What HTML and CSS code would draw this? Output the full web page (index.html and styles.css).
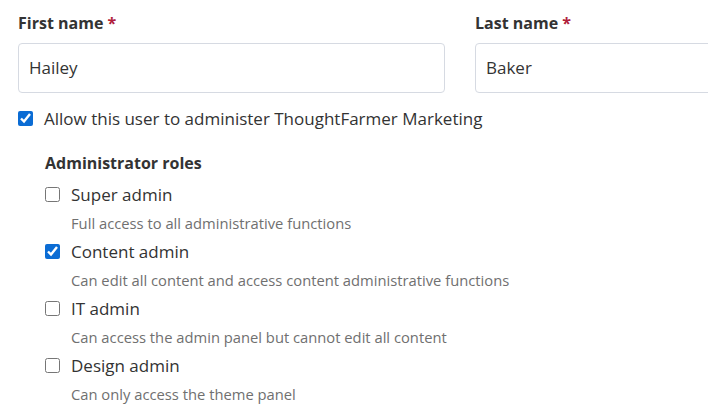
FILE: index.html
```html
<!DOCTYPE html>
<html>
<head>
<meta charset="utf-8">
<link rel="stylesheet" href="styles.css">
</head>
<body>
<div class="form">
  <div class="names">
    <div class="field">
      <label class="label">First name <span class="req">*</span></label>
      <div class="input">Hailey</div>
    </div>
    <div class="field">
      <label class="label">Last name <span class="req">*</span></label>
      <div class="input">Baker</div>
    </div>
  </div>
  <label class="allow"><input type="checkbox" checked><span>Allow this user to administer ThoughtFarmer Marketing</span></label>
  <div class="roles">
    <div class="roles-title">Administrator roles</div>
    <div class="role">
      <label class="opt"><input type="checkbox"><span>Super admin</span></label>
      <div class="desc">Full access to all administrative functions</div>
    </div>
    <div class="role">
      <label class="opt"><input type="checkbox" checked><span>Content admin</span></label>
      <div class="desc">Can edit all content and access content administrative functions</div>
    </div>
    <div class="role">
      <label class="opt"><input type="checkbox"><span>IT admin</span></label>
      <div class="desc">Can access the admin panel but cannot edit all content</div>
    </div>
    <div class="role">
      <label class="opt"><input type="checkbox"><span>Design admin</span></label>
      <div class="desc">Can only access the theme panel</div>
    </div>
  </div>
</div>
</body>
</html>
```
FILE: styles.css
```css
html, body {
  margin: 0;
  padding: 0;
  background: #fff;
  overflow: hidden;
}
body {
  font-family: "Open Sans", "Noto Sans", sans-serif;
  color: #333;
}
.form {
  padding: 11px 0 0 18px;
  width: 690px;
}
.names {
  display: grid;
  grid-template-columns: 427px 1fr;
  column-gap: 30px;
  margin-right: -236px;
}
.field {
  display: flex;
  flex-direction: column;
  gap: 8px;
}
.label {
  font-weight: 700;
  font-size: 16px;
  line-height: 24px;
  color: #333;
}
.req {
  color: #b01e3c;
}
.input {
  box-sizing: border-box;
  height: 50px;
  border: 1px solid #d6dae2;
  border-radius: 4px;
  padding: 0 10px 2px;
  display: flex;
  align-items: center;
  font-size: 17px;
  color: #333;
}
input[type="checkbox"] {
  width: 15px;
  height: 15px;
  margin: 0;
  accent-color: #0b6cd4;
  flex: none;
}
.allow {
  display: flex;
  align-items: center;
  gap: 11px;
  margin-top: 11px;
  height: 28px;
  font-size: 17px;
}
.roles {
  margin: 17px 0 0 27px;
}
.roles-title {
  font-weight: 700;
  font-size: 16px;
  line-height: 28px;
  margin-bottom: 3px;
}
.opt {
  display: flex;
  align-items: center;
  gap: 11px;
  height: 28px;
  font-size: 17px;
}
.desc {
  font-size: 14.75px;
  line-height: 28px;
  padding-top: 1px;
  color: #707070;
  padding-left: 26px;
}
```
